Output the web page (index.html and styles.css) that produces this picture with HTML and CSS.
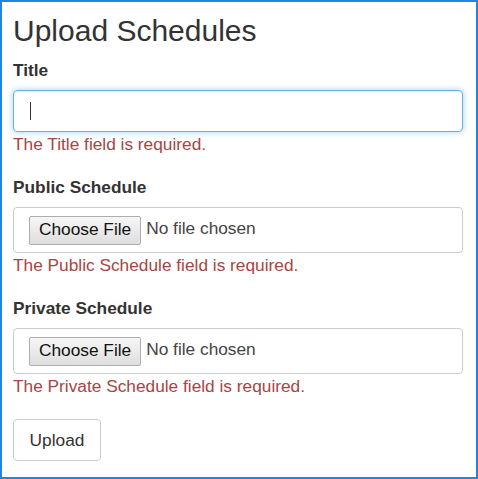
FILE: index.html
```html
<!DOCTYPE html>
<html lang="en">
<head>
<meta charset="utf-8">
<title>Upload Schedules</title>
<link rel="stylesheet" href="styles.css">
</head>
<body>
<div class="frame">
  <h2 class="title">Upload Schedules</h2>
  <form class="form">
    <div class="group">
      <label class="label">Title</label>
      <div class="text-input"><span class="caret"></span></div>
      <span class="error">The Title field is required.</span>
    </div>
    <div class="group">
      <label class="label">Public Schedule</label>
      <div class="file-input"><span class="file-btn">Choose File</span><span class="file-name">No file chosen</span></div>
      <span class="error">The Public Schedule field is required.</span>
    </div>
    <div class="group">
      <label class="label">Private Schedule</label>
      <div class="file-input"><span class="file-btn">Choose File</span><span class="file-name">No file chosen</span></div>
      <span class="error">The Private Schedule field is required.</span>
    </div>
    <div class="actions">
      <button type="button" class="btn">Upload</button>
    </div>
  </form>
</div>
</body>
</html>
```
FILE: styles.css
```css
* { box-sizing: border-box; }
html, body { margin: 0; padding: 0; background: #fff; }
body {
  font-family: "Liberation Sans", Arial, sans-serif;
  color: #333;
  font-size: 17.3px;
}
.frame {
  width: 478px;
  height: 479px;
  border: 2px solid #1e87e0;
  padding: 12px 13px 0 11px;
}
.title {
  margin: 0 0 11px;
  font-size: 30px;
  line-height: 33px;
  font-weight: 400;
}
.form { display: flex; flex-direction: column; }
.group { display: flex; flex-direction: column; margin-bottom: 19px; }
.label {
  font-weight: 700;
  line-height: 24px;
  margin-bottom: 8px;
}
.text-input {
  height: 42px;
  border: 1px solid #66afe9;
  border-radius: 4px;
  box-shadow: inset 0 1px 1px rgba(0,0,0,.075), 0 0 6px rgba(102,175,233,.6);
  display: flex;
  align-items: center;
  padding-left: 16px;
}
.caret { width: 1px; height: 18px; background: #333; }
.file-input {
  height: 46px;
  border: 1px solid #ccc;
  border-radius: 4px;
  display: flex;
  align-items: center;
  padding-left: 15px;
}
.file-btn {
  height: 29px;
  padding: 0 9px;
  border: 1px solid #adadad;
  border-radius: 2px;
  background: linear-gradient(#f6f6f6, #dedede);
  color: #111;
  display: flex;
  align-items: center;
  line-height: 1;
}
.file-name { margin-left: 5px; color: #444; line-height: 1; padding-bottom: 2px; }
.error { color: #a94442; line-height: 24px; }
.actions { padding-top: 2px; }
.btn {
  font: inherit;
  font-size: 17.3px;
  color: #333;
  background: #fff;
  border: 1px solid #ccc;
  border-radius: 4px;
  width: 88px;
  height: 42px;
  padding: 0;
}
```
